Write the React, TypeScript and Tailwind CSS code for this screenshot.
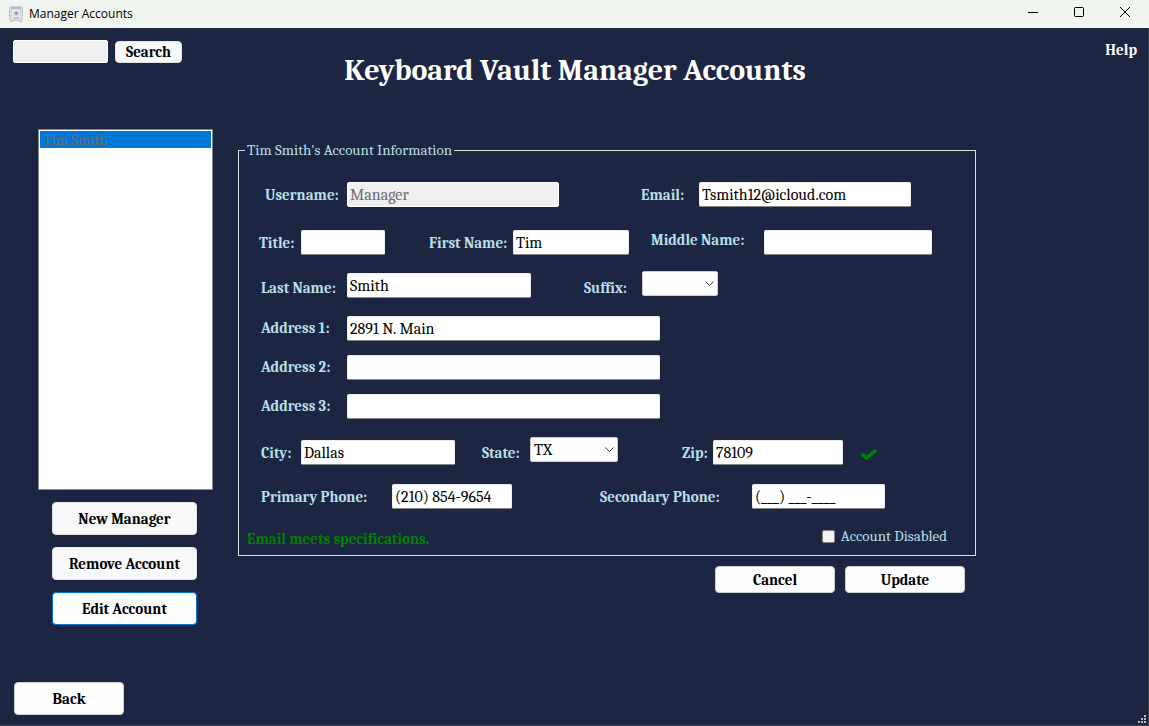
import type { InputHTMLAttributes, ButtonHTMLAttributes, ReactNode } from "react";
import { useState } from "react";

const labelBase = "shrink-0 whitespace-nowrap text-[15px] leading-5 font-bold text-[#b9dfe8]";

function Label({ htmlFor, className, children }: { htmlFor: string; className: string; children: ReactNode }) {
  return (
    <label htmlFor={htmlFor} className={`${labelBase} ${className}`}>
      {children}
    </label>
  );
}

function TextBox({ className = "", ...rest }: InputHTMLAttributes<HTMLInputElement>) {
  return (
    <input
      type="text"
      className={`h-[25px] shrink-0 rounded-xs border border-b-[#868686] border-[#ececec] bg-white px-0.5 text-[16px] leading-5 text-black outline-none disabled:border-white disabled:bg-[#f0f0f0] disabled:text-[#6d6d6d] ${className}`}
      {...rest}
    />
  );
}

function DropDown({ id, value, options, className }: { id: string; value: string; options: string[]; className: string }) {
  return (
    <div className={`relative h-[25px] shrink-0 self-start ${className}`}>
      <select
        id={id}
        defaultValue={value}
        className="h-full w-full appearance-none rounded-xs border border-[#cccccc] bg-[#fdfdfd] px-[3px] text-[16px] leading-5 text-black outline-none"
      >
        {options.map((option) => (
          <option key={option} value={option}>
            {option}
          </option>
        ))}
      </select>
      <svg
        viewBox="0 0 9 5"
        className="pointer-events-none absolute top-2.5 right-1 h-[5px] w-[9px] fill-none stroke-[#444444]"
        aria-hidden="true"
      >
        <path d="M0.5 0.5 4.5 4.5 8.5 0.5" />
      </svg>
    </div>
  );
}

function PushButton({ className = "", children, ...rest }: ButtonHTMLAttributes<HTMLButtonElement>) {
  return (
    <button
      type="button"
      className={`flex shrink-0 items-center justify-center rounded-sm border text-[15px] leading-5 font-bold whitespace-nowrap text-black ${className}`}
      {...rest}
    >
      {children}
    </button>
  );
}

function TitleBar() {
  return (
    <header className="flex h-7 shrink-0 items-center bg-[#f1f5ef] pr-px pl-2 text-black">
      <svg viewBox="0 0 16 16" className="h-4 w-4" aria-hidden="true">
        <rect x="2" y="14" width="3" height="2" fill="#c4c4c4" />
        <rect x="11" y="14" width="3" height="2" fill="#c4c4c4" />
        <rect x="1.5" y="0.5" width="13" height="14" rx="1.5" fill="#dcdce0" stroke="#cacaca" />
        <rect x="3.5" y="3" width="9" height="9.5" fill="#e7e7ea" stroke="#d2d2d6" strokeWidth="0.6" />
        <path d="M3 2h10M6 12h5" stroke="#a48de8" strokeWidth="1.2" />
        <circle cx="8.3" cy="7.3" r="2.6" fill="#cfcfd4" />
        <circle cx="8.3" cy="7.3" r="1.3" fill="#85858c" />
        <path d="M1.5 5v1.5M1.5 9v1.5" stroke="#9a9a9a" />
      </svg>
      <span className="ml-[5px] font-['Open_Sans',sans-serif] text-[12px] leading-4">Manager Accounts</span>
      <div className="ml-auto flex h-full">
        <button type="button" aria-label="Minimize" className="flex w-[46px] items-center justify-center pb-1">
          <svg viewBox="0 0 10 10" className="h-2.5 w-2.5 fill-none stroke-black" aria-hidden="true">
            <path d="M0 5.5h10" />
          </svg>
        </button>
        <button type="button" aria-label="Maximize" className="flex w-[46px] items-center justify-center pb-1">
          <svg viewBox="0 0 10 10" className="h-2.5 w-2.5 fill-none stroke-black" aria-hidden="true">
            <rect x="0.5" y="0.5" width="9" height="9" rx="1" />
          </svg>
        </button>
        <button type="button" aria-label="Close" className="flex w-[46px] items-center justify-center pb-1">
          <svg viewBox="0 0 10 10" className="h-2.5 w-2.5 fill-none stroke-black" aria-hidden="true">
            <path d="M0 0 10 10M10 0 0 10" />
          </svg>
        </button>
      </div>
    </header>
  );
}

function AccountForm() {
  const [disabled, setDisabled] = useState(false);
  return (
    <form className="flex min-w-0 flex-1 flex-col" onSubmit={(e) => e.preventDefault()}>
      <fieldset className="border border-[#dcdcdc] px-1.5 pb-1.5">
        <legend className="px-0.5 text-[15px] leading-5 text-[#b9dfe8]">Tim Smith's Account Information</legend>

        <div className="flex flex-col pt-[22px] pl-3.5">
          <div className="flex items-center">
            <Label htmlFor="username" className="w-[88px] pl-1.5">Username:</Label>
            <TextBox id="username" defaultValue="Manager" disabled className="w-[212px]" />
            <Label htmlFor="email" className="w-[140px] pl-[82px]">Email:</Label>
            <TextBox id="email" defaultValue="Tsmith12@icloud.com" className="w-[212px]" />
          </div>

          <div className="mt-[23px] flex items-center">
            <Label htmlFor="title" className="w-[42px]">Title:</Label>
            <TextBox id="title" className="w-[84px]" />
            <Label htmlFor="first-name" className="w-32 pl-11">First Name:</Label>
            <TextBox id="first-name" defaultValue="Tim" className="w-[116px]" />
            <Label htmlFor="middle-name" className="w-[135px] self-start pl-[22px]">Middle Name:</Label>
            <TextBox id="middle-name" className="w-[168px]" />
          </div>

          <div className="mt-4 flex h-[27px] items-end">
            <Label htmlFor="last-name" className="w-[88px] pl-0.5">Last Name:</Label>
            <TextBox id="last-name" defaultValue="Smith" className="w-[184px]" />
            <Label htmlFor="suffix" className="w-[111px] pl-[53px]">Suffix:</Label>
            <DropDown id="suffix" value="" options={["", "Jr.", "Sr.", "II", "III"]} className="w-[76px]" />
          </div>

          <div className="mt-[18px] flex items-center">
            <Label htmlFor="address-1" className="w-[88px] pb-0.5 pl-0.5">Address 1:</Label>
            <TextBox id="address-1" defaultValue="2891 N. Main" className="w-[313px]" />
          </div>
          <div className="mt-3.5 flex items-center">
            <Label htmlFor="address-2" className="w-[88px] pb-0.5 pl-0.5">Address 2:</Label>
            <TextBox id="address-2" className="w-[313px]" />
          </div>
          <div className="mt-3.5 flex items-center">
            <Label htmlFor="address-3" className="w-[88px] pb-0.5 pl-0.5">Address 3:</Label>
            <TextBox id="address-3" className="w-[313px]" />
          </div>

          <div className="mt-[18px] flex h-7 items-end">
            <Label htmlFor="city" className="w-[42px] pb-0.5 pl-0.5">City:</Label>
            <TextBox id="city" defaultValue="Dallas" className="w-[154px]" />
            <Label htmlFor="state" className="w-[75px] pb-0.5 pl-[27px]">State:</Label>
            <DropDown id="state" value="TX" options={["AR", "LA", "NM", "OK", "TX"]} className="w-[88px]" />
            <Label htmlFor="zip" className="w-[95px] pb-0.5 pl-16">Zip:</Label>
            <TextBox id="zip" defaultValue="78109" className="w-[130px]" />
            <svg viewBox="0 0 16 12" className="mb-1 ml-[18px] h-3 w-4" role="img" aria-label="Zip code is valid">
              <path d="M2.2 6 5.6 8.9 13.8 2.1" fill="none" stroke="#008000" strokeWidth="3.8" strokeLinecap="round" strokeLinejoin="round" />
            </svg>
          </div>

          <div className="mt-[19px] flex items-center">
            <Label htmlFor="primary-phone" className="w-[133px] pl-0.5">Primary Phone:</Label>
            <TextBox id="primary-phone" type="tel" defaultValue="(210) 854-9654" className="w-[120px]" />
            <Label htmlFor="secondary-phone" className="w-60 pl-[88px]">Secondary Phone:</Label>
            <TextBox id="secondary-phone" type="tel" defaultValue="(___) ___-____" className="w-[133px]" />
          </div>
        </div>

        <div className="mt-[17px] flex h-[23px] items-end justify-between pr-[22px] pl-0.5">
          <p className="text-[15px] leading-5 font-bold text-[#008000]" role="status">Email meets specifications.</p>
          <label className="flex items-center gap-1.5 self-start text-[15px] leading-5 text-[#b9dfe8]">
            <input
              type="checkbox"
              checked={disabled}
              onChange={(e) => setDisabled(e.target.checked)}
              className="h-[13px] w-[13px] appearance-none rounded-xs border border-[#868686] bg-[#f3f3f3] checked:bg-[#0067c0]"
            />
            Account Disabled
          </label>
        </div>
      </fieldset>

      <div className="mt-2.5 flex justify-end gap-2.5 pr-[11px]">
        <PushButton className="h-[27px] w-[120px] border-[#d0d0d0] bg-[#fdfdfd]">Cancel</PushButton>
        <PushButton type="submit" className="h-[27px] w-[120px] border-[#d0d0d0] bg-[#fdfdfd]">Update</PushButton>
      </div>
    </form>
  );
}

export default function App() {
  return (
    <div className="flex min-h-screen flex-col bg-[#1c2541] font-[Cambria,'Liberation_Serif',serif]">
      <TitleBar />
      <main className="flex flex-1 flex-col border-r border-b border-[#3d4250]">
        <div className="grid grid-cols-[1fr_auto_1fr] items-start pr-[11px] pl-[13px]">
          <form role="search" className="flex items-center gap-[7px] pt-3" onSubmit={(e) => e.preventDefault()}>
            <input
              type="search"
              aria-label="Search accounts"
              className="h-[23px] w-[95px] rounded-xs border border-white bg-[#f0f0f0] px-0.5 text-[16px] text-black outline-none"
            />
            <PushButton type="submit" className="h-[22px] w-[67px] border-[#e4e4e4] bg-[#f9f9f9]">Search</PushButton>
          </form>
          <h1 className="pt-[27px] text-[30px] leading-8 font-bold text-white">Keyboard Vault Manager Accounts</h1>
          <a href="#help" className="justify-self-end pt-3 text-[15px] leading-5 font-bold text-white">
            Help
          </a>
        </div>

        <div className="mt-[42px] flex gap-[25px] pr-[172px] pl-[38px]">
          <div className="flex w-[175px] shrink-0 flex-col items-center">
            <ul role="listbox" aria-label="Managers" className="h-[361px] w-full border border-[#828790] bg-white p-px">
              <li role="option" aria-selected="true" className="h-[17px] bg-[#0078d7] pl-[3px] text-[15px] leading-[18px] text-[#6d6d6d]">
                Tim Smith
              </li>
            </ul>
            <div className="mt-3 mr-0.5 flex flex-col gap-3">
              <PushButton className="h-[33px] w-[145px] border-[#e4e4e4] bg-[#f9f9f9]">New Manager</PushButton>
              <PushButton className="h-[33px] w-[145px] border-[#e4e4e4] bg-[#f9f9f9]">Remove Account</PushButton>
              <PushButton className="h-[33px] w-[145px] border-[#0078d4] bg-[#fdfdfd]">Edit Account</PushButton>
            </div>
          </div>
          <div className="flex min-w-0 flex-1 pt-[11px]">
            <AccountForm />
          </div>
        </div>

        <div className="mt-auto flex items-end justify-between pr-[2px] pl-3.5">
          <PushButton className="mb-2.5 h-[33px] w-[110px] border-[#d0d0d0] bg-[#fdfdfd]">Back</PushButton>
          <svg viewBox="0 0 8 8" className="mb-0.5 h-2 w-2 fill-[#c0c0c0]" aria-hidden="true">
            <path d="M6 0h2v2H6zM3 3h2v2H3zM6 3h2v2H6zM0 6h2v2H0zM3 6h2v2H3zM6 6h2v2H6z" />
          </svg>
        </div>
      </main>
    </div>
  );
}
